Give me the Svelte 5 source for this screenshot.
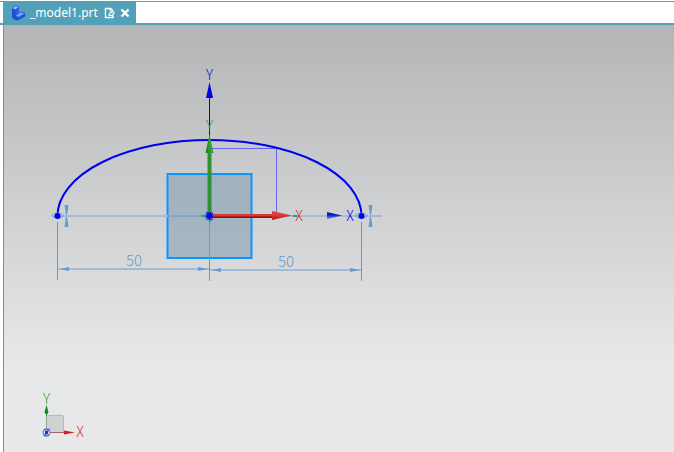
<script>
  let tab = { name: "_model1.prt", open: true };

  const dimensions = [
    { x: 134, y: 266, value: 50 },
    { x: 286, y: 267, value: 50 }
  ];

  // end points of the arc, each with its constraint marks
  const endPoints = [
    { x: 57.5, markX: 66.5 },
    { x: 361.5, markX: 370.5 }
  ];

  function closeTab() {
    tab.open = false;
    tab = tab;
  }
</script>

<div class="window">
  <header class="tab-bar">
    {#if tab.open}
      <div class="tab">
        <svg class="part-icon" width="15" height="16" viewBox="0 0 15 16" aria-hidden="true">
          <path d="M1 3 L4.5 0.5 L8 2 V8 L10 6.5 L14 8 V11.5 L6.5 15.5 L3 14.5 L1 12.5Z" fill="#1b4ed0" />
          <path d="M1.5 3.2 L4.5 1 L7.5 2.3 L4.2 4.6Z" fill="#8db8ff" />
          <path d="M4.5 5 L7.6 3 V8.4 L4.5 10.4Z" fill="#2a63ea" />
          <path d="M4.6 11 L9.8 7.2 L13.5 8.4 L8 11.8Z" fill="#78a8ff" />
          <path d="M7.5 12.6 L13.6 9 V11.3 L7.5 14.6Z" fill="#2356dc" />
        </svg>
        <span class="tab-name">{tab.name}</span>
        <svg class="edit-icon" width="11" height="12" viewBox="0 0 11 12" aria-hidden="true">
          <path d="M9 8 V10.5 H1.5 V1.5 H6.5 L9 3.5" fill="none" stroke="#fff" stroke-width="1.4" />
          <path d="M6 1 V4 H9" fill="none" stroke="#fff" stroke-width="1" />
          <path d="M5 8.5 L5.5 6.5 L8.5 4.2 L10.3 6 L7.5 8.5Z" fill="#53a1b9" stroke="#fff" stroke-width="1.1" />
        </svg>
        <button class="close" aria-label="Close" on:click={closeTab}>
          <svg width="10" height="10" viewBox="0 0 10 10" aria-hidden="true">
            <path d="M1.5 1.5 L8.5 8.5 M8.5 1.5 L1.5 8.5" stroke="#fff" stroke-width="2.4" />
          </svg>
        </button>
      </div>
    {/if}
  </header>

  <main class="viewport">
    <svg class="sketch" width="100%" height="280">
      <defs>
        <linearGradient id="redShaft" x1="0" y1="0" x2="0" y2="1">
          <stop offset="0.4" stop-color="#e03434" />
          <stop offset="0.8" stop-color="#7d1616" />
        </linearGradient>
        <linearGradient id="redHead" x1="0" y1="0" x2="0" y2="1">
          <stop offset="0.4" stop-color="#e83a3a" />
          <stop offset="1" stop-color="#a01c1c" />
        </linearGradient>
        <linearGradient id="greenHead" x1="0" y1="0" x2="1" y2="0">
          <stop offset="0" stop-color="#1d7420" />
          <stop offset="0.6" stop-color="#36a038" />
        </linearGradient>
        <linearGradient id="blueHead" x1="0" y1="0" x2="0" y2="1">
          <stop offset="0.4" stop-color="#0a14c8" />
          <stop offset="0.8" stop-color="#4a6ee0" />
        </linearGradient>
      </defs>

      <g transform="translate(-4 -25)">
        <!-- sketch plane -->
        <rect x="167.5" y="174" width="84" height="84" fill="#7896ac" fill-opacity="0.5" stroke="#0a96ff" stroke-width="2" />

        <!-- horizontal reference line -->
        <path d="M52 216 H382" stroke="#a5bad4" stroke-width="2" />
        <path d="M168 216 H206" stroke="#84a6c6" stroke-width="2" />

        <!-- dimensions -->
        <g stroke="#6699cc" stroke-width="1">
          <path d="M57.5 222 V280 M361.5 222 V281" />
          <path d="M209.5 216 V281" />
        </g>
        <path d="M58 269 H209 M210 270 H361" stroke="#a5bad4" stroke-width="2" />
        <path d="M60 269 L69 267 V271Z M208 269 L198 267 V271Z M212 270 L221 268 V272Z M360 270 L350 268 V272Z" fill="#6699cc" />
        {#each dimensions as dim}
          <text class="dim" x={dim.x} y={dim.y}>{dim.value}</text>
        {/each}

        <!-- construction box -->
        <path d="M210 148.5 H276.5 V215" fill="none" stroke="#6666f4" stroke-width="1" />

        <!-- arc -->
        <path d="M57.5 216 A152 76 0 0 1 361.5 216" fill="none" stroke="#0000f0" stroke-width="2" />

        {#each endPoints as p}
          <ellipse cx={p.x} cy="215.5" rx="5.5" ry="2.5" fill="none" stroke="#6fa3d0" stroke-width="1" />
          <circle cx={p.x} cy="216" r="3" fill="#0000f0" />
          <g transform="translate({p.markX} 216)" fill="#6699cc">
            <path d="M-2 -11 H2 L0.5 -1 H-0.5Z M-2 11 H2 L0.5 1 H-0.5Z" />
          </g>
        {/each}

        <!-- sketch axes -->
        <path d="M209.5 98 V139" stroke="#0000f0" stroke-width="1" />
        <path d="M209.5 82 L213 98 H206Z" fill="#0000f0" />
        <text class="axis blue" x="209.5" y="80">Y</text>
        <path d="M327 212 L342 215.5 L327 219Z" fill="url(#blueHead)" />
        <text class="axis blue" x="350" y="221">X</text>

        <!-- datum axes -->
        <path d="M200 216 L206 214 V218Z M210 223 L208 219 H212Z M293 215 H297 V217 H293Z" fill="#12a0a0" />
        <rect x="207.5" y="152" width="4" height="62" fill="#2f9232" />
        <path d="M209.5 134 L213.5 153 H205.5Z" fill="url(#greenHead)" />
        <text class="axis green" x="209.5" y="131">Y</text>
        <rect x="212" y="214" width="61" height="4" fill="url(#redShaft)" />
        <path d="M272 211 L292 215.5 L272 220Z" fill="url(#redHead)" />
        <text class="axis red" x="299" y="221">X</text>
        <rect x="206.5" y="212.5" width="6" height="7" fill="none" stroke="#1414c8" stroke-width="1" stroke-dasharray="2 1" />
        <circle cx="209.5" cy="216" r="3" fill="#0000f0" />
      </g>
    </svg>

    <svg class="triad" width="60" height="70" viewBox="0 -10 60 70">
      <rect x="12.5" y="23.5" width="17" height="17" rx="1" fill="#d0d1d2" stroke="#b8b9ba" />
      <path d="M12.5 21 V24" stroke="#3a8a3e" />
      <path d="M12.5 24 V38" stroke="#98a898" />
      <path d="M12.5 13 L14.5 20 L13.5 22 H11.5 L10.5 20Z" fill="#178a1e" />
      <path d="M16 40.5 H32" stroke="#a06868" />
      <path d="M30 38.5 L41 40.5 L30 42.5Z" fill="#d02020" />
      <circle cx="12.5" cy="40.5" r="4" fill="#8d949c" />
      <circle cx="12.5" cy="40.5" r="2.5" fill="#e8ecff" />
      <path d="M10 37.5 H15 L10.5 43.5 H15" fill="none" stroke="#3a6cf0" stroke-width="1.4" />
      <rect x="11" y="39" width="3" height="3" fill="#1034d8" />
      <text class="axis green" x="12.5" y="12">Y</text>
      <text class="axis red" x="46" y="45">X</text>
    </svg>
  </main>
</div>

<style>
  :global(body) {
    margin: 0;
    background: #fff;
  }

  .window {
    display: flex;
    flex-direction: column;
    box-sizing: border-box;
    min-height: 100vh;
    padding-top: 1px;
    font-family: "Noto Sans CJK SC", "Noto Sans", sans-serif;
  }

  .tab-bar {
    display: flex;
    height: 21px;
    padding-left: 3px;
    border-top: 1px solid #8b8b8b;
    border-bottom: 2px solid #53a1b9;
  }

  .tab {
    display: flex;
    align-items: center;
    box-sizing: border-box;
    padding: 0 6px 0 8px;
    background: #53a1b9;
    color: #fff;
  }

  .part-icon {
    margin-right: 4px;
  }

  .tab-name {
    font-family: "Noto Sans", "Open Sans", sans-serif;
    font-size: 12px;
    line-height: 20px;
  }

  .edit-icon {
    margin: 0 5px 0 6px;
  }

  .close {
    display: flex;
    padding: 0;
    border: none;
    background: none;
    cursor: pointer;
  }

  .viewport {
    position: relative;
    flex: 1;
    margin-left: 3px;
    border-left: 1px solid #8b8b8b;
    background: linear-gradient(#b4b5b7, #e6e8ea 80%);
  }

  .sketch {
    display: block;
  }

  .triad {
    position: absolute;
    left: 30px;
    bottom: 0;
  }

  .dim {
    font-size: 15px;
    font-weight: 300;
    text-anchor: middle;
    fill: #6699cc;
  }

  .axis {
    font-size: 14px;
    font-weight: 300;
    text-anchor: middle;
  }

  .blue {
    fill: #0000f0;
  }

  .green {
    fill: #1f9a26;
  }

  .red {
    fill: #e01c1c;
  }
</style>
